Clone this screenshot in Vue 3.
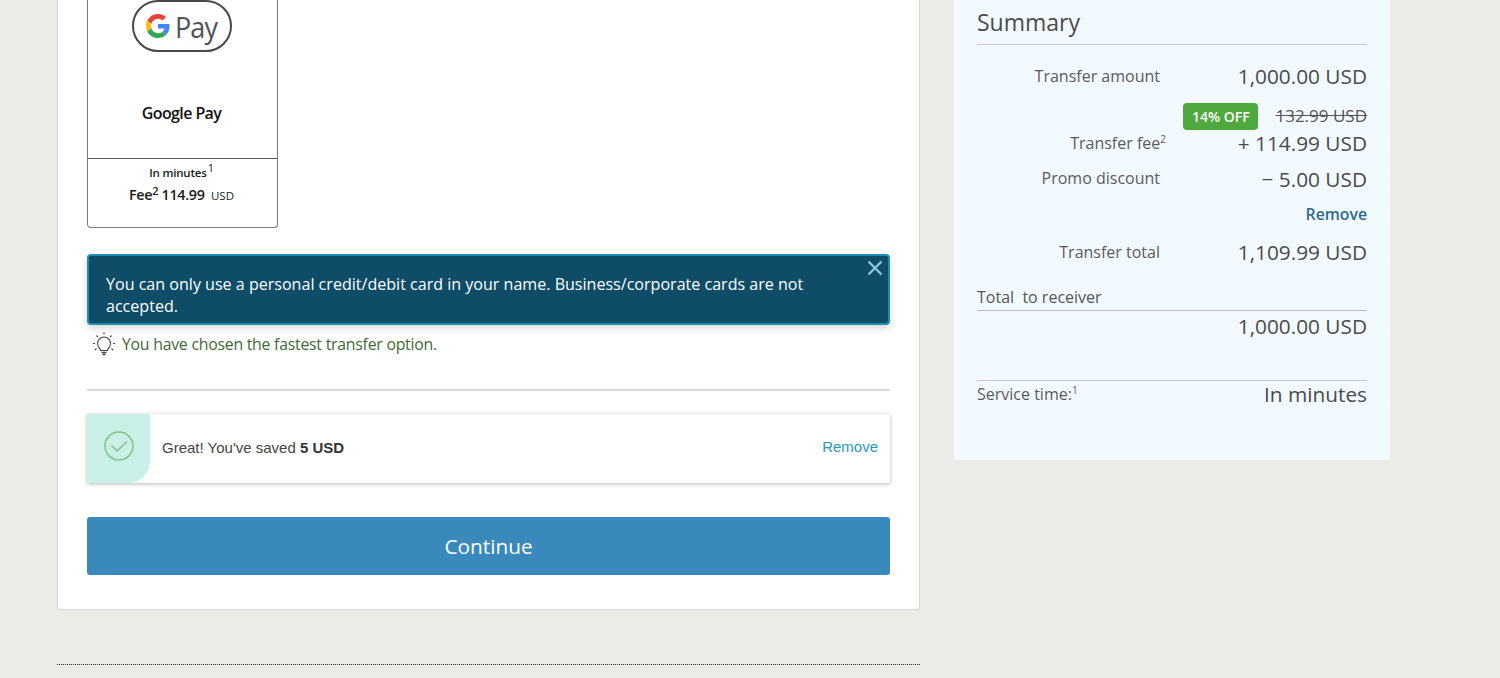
<script setup>
</script>

<template>
  <div class="page">
    <main class="panel">
      <section class="pay-card">
        <div class="pay-top">
          <div class="pill">
            <svg class="g" viewBox="0 0 48 48" width="24" height="24" aria-hidden="true">
              <path fill="#EA4335" d="M24 9.500c3.500 0 6.700 1.200 9.200 3.600l6.900-6.900C35.900 2.400 30.500 0 24 0 14.600 0 6.500 5.400 2.600 13.200l8 6.200C12.500 13.600 17.800 9.500 24 9.500z"/>
              <path fill="#4285F4" d="M47 24.500c0-1.600-.1-3.100-.4-4.500H24v9h12.900c-.6 3-2.200 5.500-4.700 7.200l7.700 6c4.500-4.200 7.100-10.300 7.100-17.700z"/>
              <path fill="#FBBC05" d="M10.500 28.600c-.5-1.400-.8-3-.8-4.600s.3-3.200.8-4.600l-8-6.200C.9 16.500 0 20.100 0 24s.9 7.500 2.600 10.800l7.900-6.200z"/>
              <path fill="#34A853" d="M24 48c6.500 0 11.900-2.100 15.900-5.800l-7.700-6c-2.200 1.400-4.900 2.300-8.200 2.300-6.200 0-11.500-4.200-13.400-9.800l-8 6.200C6.500 42.600 14.600 48 24 48z"/>
            </svg>
            <span class="pay-word">Pay</span>
          </div>
          <div class="pay-name">Google Pay</div>
        </div>
        <div class="pay-bottom">
          <div class="pay-time">In minutes<sup>1</sup></div>
          <div class="pay-fee">Fee<sup>2</sup> 114.99 <span class="usd">USD</span></div>
        </div>
      </section>

      <div class="alert">
        You can only use a personal credit/debit card in your name. Business/corporate cards are not accepted.
        <svg class="close" viewBox="0 0 16 16" width="16" height="16" aria-hidden="true">
          <path d="M1.500 1.500 14.500 14.500M14.500 1.500 1.500 14.500" stroke="#8cc4e0" stroke-width="2.400" fill="none"/>
        </svg>
      </div>

      <div class="hint">
        <svg viewBox="0 0 24 24" width="24" height="24" fill="none" stroke="#444" stroke-width="1.100" aria-hidden="true">
          <path d="M8.500 17c-.2-2-3-3.500-3-7a6.500 6.500 0 0 1 13 0c0 3.500-2.800 5-3 7z" transform="translate(0 1.500)"/>
          <path d="M9.500 20.500h5M10.500 22.500h3" stroke-width="1.400"/>
          <path d="M12 .5v2M4.500 3.500l1.500 1.500M19.500 3.500 18 5M1 11.500h2M21 11.500h2M3 18l1.500-1.500M21 18l-1.500-1.500"/>
        </svg>
        <span>You have chosen the fastest transfer option.</span>
      </div>

      <hr class="rule" />

      <div class="promo">
        <div class="promo-mark">
          <svg viewBox="0 0 30 30" width="30" height="30" fill="none" stroke="#85c187" stroke-width="1.500" aria-hidden="true">
            <circle cx="15" cy="15" r="14"/>
            <path d="M7.500 14.500 13 20 23 10.500"/>
          </svg>
        </div>
        <div class="promo-text">Great! You've saved <b>5 USD</b></div>
        <a class="promo-remove">Remove</a>
      </div>

      <button class="continue">Continue</button>
    </main>

    <aside class="summary">
      <h2>Summary</h2>

      <div class="row r-amount"><span class="lbl">Transfer amount</span><span class="val">1,000.00 USD</span></div>

      <div class="fee-top">
        <span class="badge">14% OFF</span>
        <s class="old">132.99 USD</s>
      </div>
      <div class="row r-fee"><span class="lbl fee-lbl">Transfer fee<sup>2</sup></span><span class="val">+ 114.99 USD</span></div>
      <div class="row r-promo"><span class="lbl">Promo discount</span><span class="val">− 5.00 USD</span></div>
      <div class="remove-line"><a>Remove</a></div>
      <div class="row r-total"><span class="lbl">Transfer total</span><span class="val">1,109.99 USD</span></div>

      <div class="receiver">Total &nbsp;to receiver</div>
      <div class="receiver-val">1,000.00 USD</div>

      <div class="service">
        <span class="svc-lbl">Service time:<sup>1</sup></span>
        <span class="svc-val">In minutes</span>
      </div>
    </aside>

    <div class="dots"></div>
  </div>
</template>

<style>
html, body { margin: 0; background: #ebebe7; overflow: hidden; }
</style>

<style scoped>
.page {
  display: grid;
  grid-template-columns: 863px 436px;
  column-gap: 34px;
  align-items: start;
  align-content: start;
  padding-left: 57px;
  margin-top: -30px;
  height: 708px;
  box-sizing: border-box;
  font-family: "Open Sans", "Liberation Sans", sans-serif;
  color: #4a4a4a;
}
.panel {
  background: #fff;
  border: 1px solid #d6d6d4;
  padding: 0 29px 34px;
  height: 640px;
  box-sizing: border-box;
}
.pay-card {
  width: 191px;
  height: 257px;
  box-sizing: border-box;
  border: 1px solid #77797b;
  border-top: 0;
  border-radius: 0 0 4px 4px;
  display: flex;
  flex-direction: column;
}
.pay-top {
  height: 188px;
  box-sizing: border-box;
  border-bottom: 1px solid #55585a;
  display: flex;
  flex-direction: column;
  align-items: center;
}
.pill {
  margin: 29px 2px 0 0;
  width: 100px;
  height: 52px;
  box-sizing: border-box;
  border: 2px solid #46484a;
  border-radius: 27px;
  padding-left: 12px;
  display: flex;
  align-items: center;
  gap: 5px;
}
.pay-word {
  font-size: 30px;
  line-height: 34px;
  color: #505357;
  letter-spacing: -1px;
  transform: scaleX(.9);
  transform-origin: left;
  width: 47px;
  margin-top: 2px;
}
.pay-name {
  margin: 50px 2px 0 0;
  font-size: 16px;
  line-height: 22px;
  font-weight: 600;
  letter-spacing: -.6px;
  color: #111;
}
.pay-bottom { text-align: center; color: #1a1a1a; padding-right: 2px; }
.pay-time {
  margin-top: 5px;
  font-size: 11.500px;
  line-height: 18px;
  font-weight: 600;
  letter-spacing: -.2px;
}
.pay-time sup { font-size: 11px; font-weight: 400; line-height: 0; margin-left: 1px; vertical-align: 5px; }
.pay-fee {
  margin-top: 3px;
  font-size: 14.300px;
  line-height: 20px;
  font-weight: 600;
  letter-spacing: -.3px;
}
.pay-fee sup { font-size: 11px; line-height: 0; vertical-align: 5px; }
.usd { font-size: 11.500px; font-weight: 400; margin-left: 3px; letter-spacing: 0; }

.alert {
  position: relative;
  margin-top: 26px;
  height: 71px;
  box-sizing: border-box;
  background: #0e4c68;
  border: 2px solid #1a8fb2;
  border-radius: 4px;
  box-shadow: 0 3px 8px rgba(0,0,0,.16);
  color: #fff;
  font-size: 16.070px;
  line-height: 22px;
  padding: 17px 60px 0 17px;
}
.close { position: absolute; top: 4px; right: 5px; }

.hint {
  display: flex;
  align-items: center;
  gap: 6px;
  margin: 7px 0 0 5px;
  height: 24px;
  font-size: 15.800px;
  letter-spacing: -.23px;
  color: #3f6a35;
}
.rule {
  border: 0;
  border-top: 2px solid #d8d8d6;
  margin: 33px 0 0;
}
.promo {
  margin-top: 23px;
  height: 69px;
  background: #fff;
  box-shadow: 0 1px 4px rgba(0,0,0,.28);
  display: flex;
  align-items: center;
  font-family: "Liberation Sans", Arial, sans-serif;
  font-size: 15px;
  color: #444;
}
.promo-mark {
  width: 63px;
  height: 100%;
  background: #c9f0e6;
  border-radius: 0 0 22px 0;
  display: flex;
  align-items: center;
  justify-content: center;
  padding-bottom: 6px;
  box-sizing: border-box;
}
.promo-text { margin-left: 12px; flex: 1; padding-bottom: 2px; }
.promo-text b { color: #333; }
.promo-remove { color: #2a9ab5; margin-right: 12px; padding-bottom: 4px; }
.continue {
  display: block;
  width: 100%;
  height: 58px;
  margin-top: 34px;
  background: #3a89bd;
  border: 0;
  border-radius: 3px;
  color: #fff;
  font-family: inherit;
  font-size: 20.800px;
}

.summary {
  background: #f3faff;
  height: 490px;
  box-sizing: border-box;
  padding: 37px 23px 0;
}
h2 {
  margin: 0;
  height: 37px;
  border-bottom: 1px solid #c9c9cd;
  font-size: 23px;
  line-height: 30px;
  font-weight: 400;
  color: #4a4a4a;
}
.row {
  display: flex;
  justify-content: space-between;
  align-items: center;
}
.lbl {
  width: 183px;
  text-align: right;
  font-size: 16px;
  color: #5a5a5a;
}
.val { font-size: 20.800px; line-height: 28px; color: #4a4a4a; }
.r-amount { margin-top: 17px; }
.fee-lbl { width: 189px; }
.fee-lbl sup { font-size: 10px; line-height: 0; vertical-align: 6px; }
.fee-top {
  display: flex;
  justify-content: flex-end;
  align-items: center;
  margin-top: 11px;
  height: 28px;
  gap: 17px;
}
.badge {
  background: #4fa83d;
  color: #fff;
  border-radius: 4px;
  font-size: 14px;
  font-weight: 600;
  line-height: 27px;
  margin-top: 3px;
  width: 75px;
  text-align: center;
}
.old { font-size: 17px; color: #555; }
.r-fee { margin-top: 0; }
.r-promo { margin-top: 8px; }
.r-promo .lbl { padding-bottom: 2px; }
.remove-line {
  text-align: right;
  margin-top: 10px;
  font-size: 15.800px;
  line-height: 22px;
  font-weight: 600;
  color: #2b6a8c;
}
.r-total { margin-top: 13px; }
.receiver {
  margin-top: 19px;
  height: 25px;
  border-bottom: 1px solid #bdbdc4;
  font-size: 16px;
  line-height: 24px;
  color: #555;
}
.receiver-val {
  text-align: right;
  margin-top: 1px;
  font-size: 20.800px;
  line-height: 28px;
}
.service {
  margin-top: 40px;
  border-top: 1px solid #c4c4ca;
  display: flex;
  justify-content: space-between;
  align-items: flex-start;
}
.svc-lbl { font-size: 16px; line-height: 26px; color: #5a5a5a; }
.svc-lbl sup { font-size: 10px; line-height: 0; vertical-align: 6px; }
.svc-val { font-size: 20.800px; line-height: 26px; }
.dots {
  grid-column: 1;
  margin-top: 54px;
  border-top: 1px dotted #222;
}
</style>
